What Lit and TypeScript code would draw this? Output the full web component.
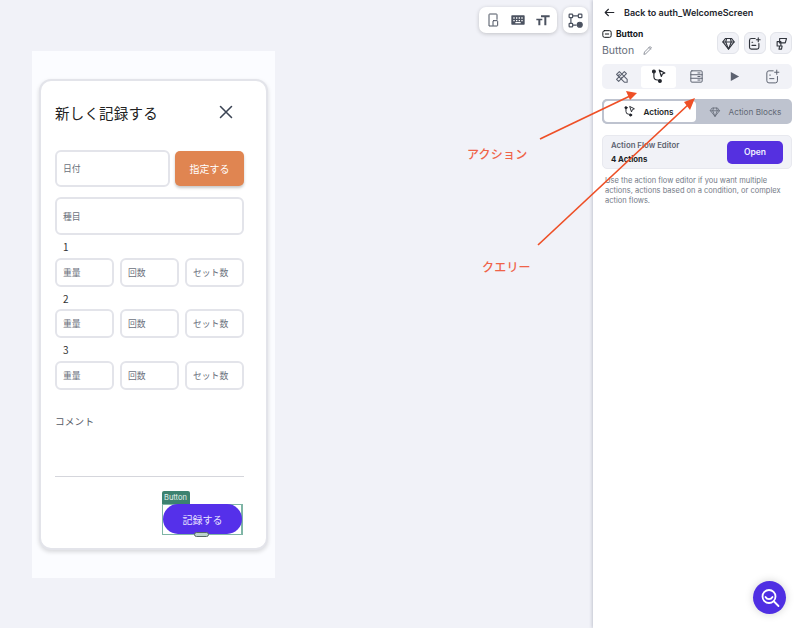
import { LitElement, html, css, svg } from "lit";
import { customElement } from "lit/decorators.js";

const ic = (body: unknown, size = 16, sw = 1.5) => html`<svg width=${size} height=${size} viewBox="0 0 24 24" fill="none" stroke="currentColor" stroke-width=${sw} stroke-linecap="round" stroke-linejoin="round">${body}</svg>`;

const gem = svg`<path d="M7 4h10l4 5.500L12 21 3 9.500z"/><path d="M3 9.500h18M9 4 7.500 9.500 12 21l4.500-11.500L15 4"/>`;
const flow = svg`<circle cx="5.500" cy="5" r="2" fill="currentColor"/><path d="M5.500 7v5a5 5 0 0 0 5 5h1"/><circle cx="14" cy="18.500" r="2" fill="currentColor"/><path d="M13 3l8 4-3.500 1.500L16 12z"/>`;
const addDoc = svg`<path d="M19 12v6a3 3 0 0 1-3 3H7a3 3 0 0 1-3-3V7a3 3 0 0 1 3-3h6"/><path d="M8 10h1M8 15h6M18 3v6M15 6h6"/>`;

@customElement("app-root")
export class AppRoot extends LitElement {
  static styles = css`
    :host { display: block; width: 800px; height: 628px; overflow: hidden; position: relative; background: #f1f2f8; font-family: "Noto Sans CJK JP", "Noto Sans", sans-serif; color: #14181b; }
    .layout { display: flex; height: 628px; }
    .canvas { width: 593px; flex: none; padding: 51px 0 0 32px; box-sizing: border-box; position: relative; }
    .phone { width: 243px; height: 527px; background: #fbfcff; padding: 28px 7px 0; box-sizing: border-box; }
    .card { width: 229px; height: 471px; box-sizing: border-box; background: #fff; border: 2px solid #e3e4ea; border-radius: 12px; box-shadow: 0 2px 4px rgba(0,0,0,.14); padding: 0 22px 0 14px; position: relative; }
    .head { display: flex; justify-content: space-between; align-items: center; height: 24px; margin-top: 19px; padding-right: 7px; font-size: 14.500px; letter-spacing: .2px; color: #222; }
    .head svg { color: #3b4454; }
    .daterow { display: flex; gap: 5px; margin-top: 26px; align-items: center; }
    .field { box-sizing: border-box; border: 2px solid #e3e4ea; border-radius: 6px; background: #fff; display: flex; align-items: center; padding-left: 6px; font-size: 8.800px; color: #6b717c; }
    .date { width: 115px; height: 37px; }
    .pick { width: 69px; height: 35px; border: 0; background: #e08551; color: #fff; border-radius: 5px; font: inherit; font-size: 10px; box-shadow: 0 2px 3px rgba(0,0,0,.22); padding: 0; }
    .type { height: 38px; margin-top: 10px; }
    .num { height: 12px; line-height: 12px; font-size: 10px; margin: 6px 0 5px 8px; color: #333; }
    .sets { display: grid; grid-template-columns: repeat(3, 59px); column-gap: 6px; }
    .sets .field { height: 29px; }
    .num.two { margin-top: 6px; margin-bottom: 4px; }
    .num.three { margin-top: 6px; margin-bottom: 5px; }
    .comment { margin-top: 24px; height: 14px; line-height: 14px; font-size: 9.600px; color: #555b66; letter-spacing: .2px; }
    .rule { height: 1px; background: #d5d6dc; margin-top: 48px; }
    .selected { position: absolute; left: 121px; top: 423px; width: 78px; height: 29px; border: 1px solid #7fb5a6; border-right-width: 2px; background: #fff; }
    .primary { display: flex; align-items: center; justify-content: center; height: 30px; width: 79px; margin-top: -1px; border-radius: 15px; background: #5530ea; color: #e8e4ff; font-size: 10px; box-sizing: border-box; }
    .tag { position: absolute; left: -1px; top: -14px; width: 28px; height: 13px; background: #3c8270; color: #e6f3ef; font: 7.500px/13px "Inter", sans-serif; border-radius: 2px 2px 0 0; padding-left: 2px; box-sizing: border-box; }
    .handle { position: absolute; left: 31px; top: 27px; width: 15px; height: 5px; box-sizing: border-box; background: #bcd3cc; border: 1px solid #566a66; border-radius: 3px; }
    .tools { position: absolute; top: 7px; left: 479px; display: flex; gap: 6px; }
    .tool { display: flex; align-items: center; height: 26px; background: #fff; border-radius: 7px; box-shadow: 0 1px 4px rgba(0,0,0,.2); color: #4b5260; }
    .tool.wide { width: 78px; justify-content: space-around; padding: 0 2px; box-sizing: border-box; }
    .tool.single { width: 25px; justify-content: center; }
    .panel { width: 207px; flex: none; background: #fff; box-shadow: -1px 0 3px rgba(60,65,90,.25); font-family: "Inter", sans-serif; padding: 0 8px 0 9px; box-sizing: border-box; position: relative; }
    .back { display: flex; align-items: center; gap: 8px; height: 25px; font-size: 9px; font-weight: 600; color: #23262d; padding-left: 1px; }
    .btnhead { display: flex; justify-content: space-between; align-items: flex-start; margin-top: 1px; }
    .btnname { display: flex; align-items: center; gap: 4px; height: 15px; font-size: 8.500px; font-weight: 700; }
    .subname { display: flex; align-items: center; gap: 8px; height: 18px; font-size: 10.500px; color: #666c78; }
    .minis { display: flex; gap: 4.500px; margin-top: 6px; }
    .mini { width: 22px; height: 22px; border-radius: 6px; background: #f1f2f7; border: 1px solid #e2e4ea; box-sizing: border-box; display: flex; align-items: center; justify-content: center; color: #30343c; }
    .tabs { display: flex; align-items: center; height: 25px; margin-top: 5px; background: #f1f2f7; border-radius: 5px; }
    .tab { width: 38px; display: flex; align-items: center; justify-content: center; color: #5c6270; height: 22px; border-radius: 3px; }
    .tab.on { width: 35px; background: #fff; color: #23262d; margin: 0 1px; }
    .seg { display: flex; height: 25px; margin-top: 10px; background: #bec3cf; border-radius: 5px; font-size: 8.200px; box-sizing: border-box; }
    .seg > div { display: flex; align-items: center; justify-content: center; gap: 7px; }
    .seg .on { width: 96px; background: #fff; border: 2px solid #bec3cf; border-radius: 6px; font-weight: 600; color: #1c1f26; box-sizing: border-box; padding-right: 3px; }
    .seg .off { flex: 1; color: #626875; gap: 8px; }
    .editor { display: flex; justify-content: space-between; align-items: center; height: 34px; margin-top: 11px; padding: 0 8px; background: #f1f2f7; border: 1px solid #e8e9ef; border-radius: 5px; box-sizing: border-box; }
    .editor b { display: block; font-size: 7.800px; line-height: 14px; font-weight: 600; color: #5d6370; }
    .editor b + b { color: #1c1f26; font-weight: 700; }
    .open { width: 56px; height: 23px; background: #5530e0; color: #f1efff; border: 0; border-radius: 5px; font: 600 8.500px "Inter", sans-serif; padding: 0; }
    .help { margin: 7px 0 0 3px; font-size: 7.500px; line-height: 10px; color: #737986; width: 186px; }
    .fab { position: absolute; right: 14px; bottom: 14px; width: 33px; height: 33px; border-radius: 50%; background: #4f2fe3; color: #fff; display: flex; align-items: center; justify-content: center; box-shadow: 0 0 8px rgba(0,0,0,.18); }
    .notes { position: absolute; inset: 0; width: 800px; height: 628px; pointer-events: none; }
    .label { position: absolute; font-size: 12px; font-weight: 500; color: #ef6348; white-space: nowrap; line-height: 14px; letter-spacing: .2px; }
    .l1 { left: 467px; top: 147px; }
    .l2 { left: 482px; top: 260px; }
  `;

  private sets() {
    return html`<div class="sets"><div class="field">重量</div><div class="field">回数</div><div class="field">セット数</div></div>`;
  }

  render() {
    return html`
      <div class="layout">
        <div class="canvas">
          <div class="phone">
            <div class="card">
              <div class="head"><span>新しく記録する</span>${ic(svg`<path d="M6 6l12 12M18 6 6 18"/>`, 22, 1.7)}</div>
              <div class="daterow"><div class="field date">日付</div><button class="pick">指定する</button></div>
              <div class="field type">種目</div>
              <div class="num">1</div>${this.sets()}
              <div class="num two">2</div>${this.sets()}
              <div class="num three">3</div>${this.sets()}
              <div class="comment">コメント</div>
              <div class="rule"></div>
              <div class="selected">
                <div class="tag">Button</div>
                <div class="primary">記録する</div>
                <div class="handle"></div>
              </div>
            </div>
          </div>
          <div class="tools">
            <div class="tool wide">
              ${ic(svg`<path d="M18 11V4a1 1 0 0 0-1-1H7a1 1 0 0 0-1 1v17h6"/><rect x="12" y="13" width="7" height="8" rx="1"/>`, 16)}
              <svg width="16" height="16" viewBox="0 0 24 24" fill="currentColor"><path fill-rule="evenodd" d="M3 5h18a1 1 0 0 1 1 1v12a1 1 0 0 1-1 1H3a1 1 0 0 1-1-1V6a1 1 0 0 1 1-1zm2 3v2h2V8zm4 0v2h2V8zm4 0v2h2V8zm4 0v2h2V8zM5 12v2h2v-2zm4 0v2h2v-2zm4 0v2h2v-2zm4 0v2h2v-2zm-9 3v2h8v-2z"/></svg>
              <svg width="16" height="16" viewBox="0 0 24 24" fill="currentColor"><path d="M9 5h13v3h-5v12h-3V8H9zM2 10h9v2.500H8V20H5v-7.500H2z"/></svg>
            </div>
            <div class="tool single">
              ${ic(svg`<rect x="3" y="3" width="5" height="5" rx="1"/><rect x="16" y="3" width="5" height="5" rx="1"/><rect x="3" y="16" width="5" height="5" rx="1"/><path d="M8 5.500h8M5.500 8v8M8 18.500h5"/><circle cx="18" cy="18" r="3.500" fill="currentColor"/>`, 17, 1.7)}
            </div>
          </div>
        </div>
        <aside class="panel">
          <div class="back">${ic(svg`<path d="M20 12H4M10 6l-6 6 6 6"/>`, 13, 2)}<span>Back to auth_WelcomeScreen</span></div>
          <div class="btnhead">
            <div>
              <div class="btnname">${ic(svg`<rect x="2" y="4" width="20" height="16" rx="4"/><path d="M8 12h8"/>`, 10, 2.4)}Button</div>
              <div class="subname">Button ${ic(svg`<path d="M4 20l1-4L16 5l3 3L8 19zM14 7l3 3"/>`, 12, 1.4)}</div>
            </div>
            <div class="minis">
              <div class="mini">${ic(gem, 15, 1.8)}</div>
              <div class="mini">${ic(addDoc, 15, 1.8)}</div>
              <div class="mini">${ic(svg`<path d="M9 4h11l-2 7H9zM5 9h6v7H5zM9 16h4l-1 5H8z"/>`, 15, 1.8)}</div>
            </div>
          </div>
          <div class="tabs">
            <div class="tab">${ic(svg`<path d="M5 9 9 5l11 11v4h-4zM16 5l3 3L8 19l-3-3zM7 11l2-2M11 15l2-2"/>`, 17, 1.5)}</div>
            <div class="tab on">${ic(flow, 17, 1.6)}</div>
            <div class="tab">${ic(svg`<rect x="4" y="4" width="16" height="16" rx="1.500"/><path d="M4 9.500h16M4 14.500h16M14 7h3M14 12h3M14 17h3"/>`, 17, 1.4)}</div>
            <div class="tab"><svg width="11" height="11" viewBox="0 0 24 24" fill="currentColor"><path d="M4 2l18 10L4 22z"/></svg></div>
            <div class="tab">${ic(addDoc, 17, 1.4)}</div>
          </div>
          <div class="seg">
            <div class="on">${ic(flow, 13, 1.7)}Actions</div>
            <div class="off">${ic(gem, 12, 1.6)}Action Blocks</div>
          </div>
          <div class="editor">
            <div><b>Action Flow Editor</b><b>4 Actions</b></div>
            <button class="open">Open</button>
          </div>
          <p class="help">Use the action flow editor if you want multiple actions, actions based on a condition, or complex action flows.</p>
          <div class="fab">${ic(svg`<circle cx="11" cy="10.500" r="6.500"/><path d="M7.500 11a4 4 0 0 0 7 0M16 15.500l4.500 4.500"/>`, 24, 1.8)}</div>
        </aside>
      </div>
      <svg class="notes" viewBox="0 0 800 628" fill="none">
        <path d="M540 139 630 96" stroke="#ee4f26" stroke-width="1.700"/>
        <path d="M637 93 626 91 630 100z" fill="#ee4f26"/>
        <path d="M538 245 689 104" stroke="#ee4f26" stroke-width="1.700"/>
        <path d="M695 98 684 102 690 110z" fill="#ee4f26"/>
      </svg>
      <span class="label l1">アクション</span>
      <span class="label l2">クエリー</span>
    `;
  }
}
